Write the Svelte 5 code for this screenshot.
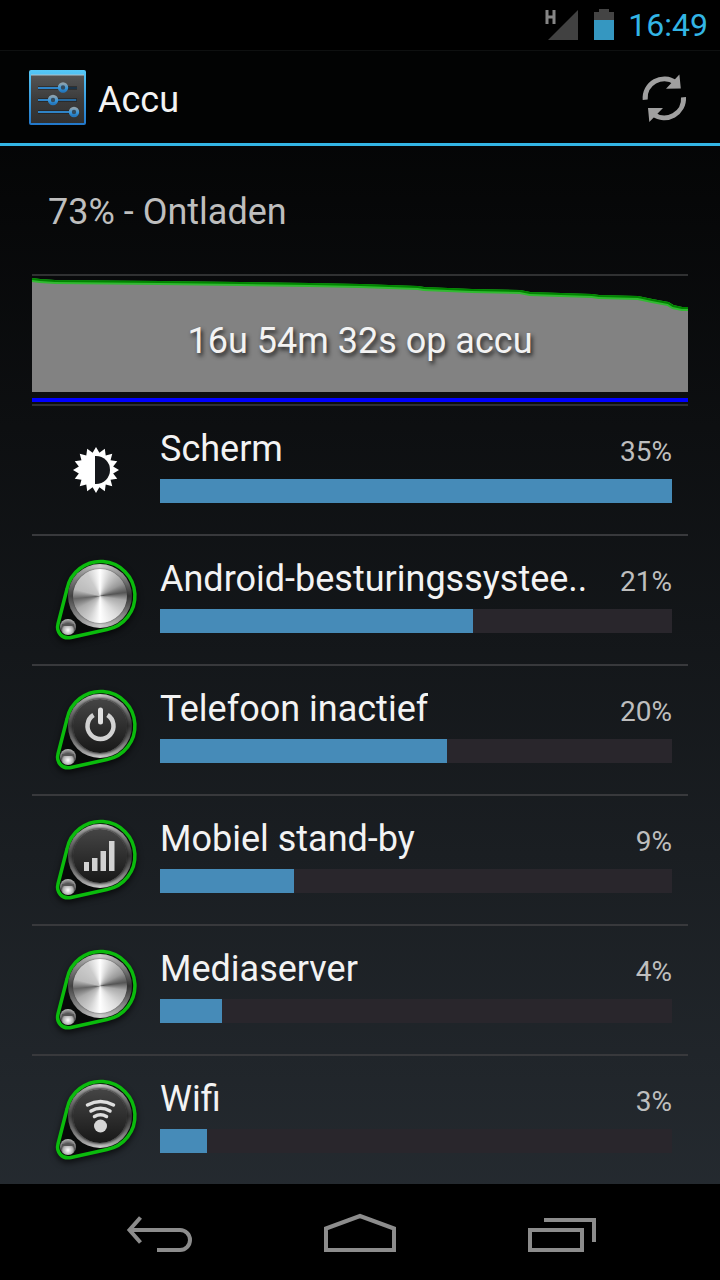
<script lang="ts">
	type Icon = 'display' | 'metal' | 'power' | 'signal' | 'wifi';

	interface Usage {
		name: string;
		percent: number;
		icon: Icon;
		// width of the bar relative to the heaviest consumer
		share: number;
	}

	const usage: Usage[] = [
		{ name: 'Scherm', percent: 35, icon: 'display', share: 100 },
		{ name: 'Android-besturingssystee..', percent: 21, icon: 'metal', share: 61.2 },
		{ name: 'Telefoon inactief', percent: 20, icon: 'power', share: 56.1 },
		{ name: 'Mobiel stand-by', percent: 9, icon: 'signal', share: 26.2 },
		{ name: 'Mediaserver', percent: 4, icon: 'metal', share: 12.1 },
		{ name: 'Wifi', percent: 3, icon: 'wifi', share: 9.2 }
	];

	// battery level over time, in chart units (656 x 116)
	const history = [
		[0, 4], [8, 5], [23, 6], [128, 7], [208, 8], [278, 9], [328, 10], [386, 12],
		[392, 13], [440, 15], [488, 16], [498, 18], [560, 20], [567, 21], [606, 22],
		[620, 25], [636, 28], [641, 31], [650, 33], [656, 33]
	];
	const line = history.map((p) => p.join(',')).join(' ');

	// 16-pointed star round the origin
	function star(outer: number, inner: number): string {
		const points = [];
		for (let i = 0; i < 32; i++) {
			const r = i % 2 ? inner : outer;
			const a = (i * Math.PI) / 16;
			points.push(`${(r * Math.sin(a)).toFixed(2)},${(-r * Math.cos(a)).toFixed(2)}`);
		}
		return points.join(' ');
	}
</script>

<div class="screen">
	<div class="status">
		<svg class="signal" width="34" height="34" viewBox="544 8 34 34" aria-hidden="true">
			<path d="M578 10V40H548Z" fill="#414141" />
			<path d="M543 8H557V25H543Z" fill="#000" />
			<path d="M547 10V24M554 10V24M547 17H554" stroke="#858585" stroke-width="3" />
		</svg>
		<svg width="20" height="32" viewBox="0 0 20 32" aria-hidden="true">
			<path d="M5 0H15V3H20V12H0V3H5Z" fill="#444" />
			<path d="M0 11H20V31H0Z" fill="#3597c1" />
		</svg>
		<time>16:49</time>
	</div>

	<header>
		<svg width="58" height="56" viewBox="0 0 58 56" aria-hidden="true">
			<defs>
				<linearGradient id="panel" x1="0" y1="0" x2="0" y2="1">
					<stop offset="0" stop-color="#555" />
					<stop offset="0.5" stop-color="#3c3c3c" />
					<stop offset="1" stop-color="#303030" />
				</linearGradient>
				<linearGradient id="frame" x1="0" y1="0" x2="0" y2="1">
					<stop offset="0" stop-color="#55c8f7" />
					<stop offset="1" stop-color="#2277c9" />
				</linearGradient>
				<linearGradient id="ring" x1="0" y1="0" x2="0" y2="1">
					<stop offset="0" stop-color="#8ba1ae" />
					<stop offset="0.6" stop-color="#3597dd" />
					<stop offset="1" stop-color="#2478be" />
				</linearGradient>
			</defs>
			<rect x="1" y="0" width="57" height="55" rx="2" fill="url(#frame)" />
			<path d="M3 5H56V53H3Z" fill="url(#panel)" />
			<path d="M3 5H56" stroke="#a9c4d0" />
			<path d="M10 18H49M10 30H49M10 42H49" stroke="#1b1b1b" stroke-width="3" />
			<path d="M10 18H31M10 30H20M29 30H48M10 42H42" stroke="#2f83c6" stroke-width="2" />
			<path d="M39 18H49M30 30H49" stroke="#214e75" stroke-width="1" />
			<g fill="#334b5f" stroke="url(#ring)" stroke-width="3">
				<circle cx="35" cy="17.5" r="3.7" />
				<circle cx="25" cy="30" r="3.7" />
				<circle cx="46" cy="42" r="3.7" />
			</g>
		</svg>
		<h1>Accu</h1>
		<button class="refresh" aria-label="Vernieuwen">
			<svg width="48" height="52" viewBox="640 72 48 52" aria-hidden="true">
				<g fill="none" stroke="#a0a0a0" stroke-width="5">
					<path d="M645.2 99.8A19.2 19.2 0 0 1 675.5 82.5" />
					<path d="M683.5 97.2A19.2 19.2 0 0 1 653.2 114.2" />
				</g>
				<path d="M679.4 74.4L680.8 88.5L666 88.8Z M649.3 122L648 108L663 108Z" fill="#a0a0a0" />
			</svg>
		</button>
	</header>

	<main>
		<p class="summary">73% - Ontladen</p>

		<div class="chart">
			<svg class="level" viewBox="0 0 656 116" preserveAspectRatio="none" aria-hidden="true">
				<polygon points="0,116 {line} 656,116" fill="#828282" />
				<polyline points={line} fill="none" stroke="#32b932" stroke-width="4" />
				<polyline points={line} fill="none" stroke="#008400" stroke-width="2" transform="translate(0 -1)" />
			</svg>
			<span class="duration">16u 54m 32s op accu</span>
			<div class="running"></div>
		</div>

		<ul>
			{#each usage as item}
				<li>
					<div class="icon">
						{#if item.icon === 'display'}
							<svg viewBox="-48 -48 96 96" aria-hidden="true">
								<polygon points={star(23, 17.5)} fill="#fff" />
								<path d="M-1 -14H0A14 14 0 0 1 0 14H-1Z" fill="#14161a" />
							</svg>
						{:else}
							<svg class="base" viewBox="0 0 96 96" aria-hidden="true">
								<defs>
									<radialGradient id="rivet" cx="0.5" cy="0.7" r="0.7">
										<stop offset="0" stop-color="#fff" />
										<stop offset="0.45" stop-color="#aaa" />
										<stop offset="0.6" stop-color="#555" />
										<stop offset="1" stop-color="#bbb" />
									</radialGradient>
								</defs>
								<path
									d="M19 37A34.300 34.300 0 1 1 59 77.500L23 85.500C14 87.500 8 80 10 72Z"
									fill="#080a09"
									stroke="#0bbb0d"
									stroke-width="3.500"
								/>
								<circle cx="20" cy="75" r="8" fill="url(#rivet)" />
								<path d="M14 73H26" stroke="#555" stroke-width="2" />
							</svg>
							<div class="rim"></div>
							<div class="face" class:dark={item.icon !== 'metal'}></div>
							<svg viewBox="0 0 96 96" aria-hidden="true">
								{#if item.icon === 'power'}
									<path d="M45.5 33A13 13 0 1 0 59.5 33" fill="none" stroke="#d2d2d2" stroke-width="4.5" />
									<path d="M52.5 28V40" stroke="#e0e0e0" stroke-width="5" stroke-linecap="round" />
								{:else if item.icon === 'signal'}
									<path
										d="M36 50H41V59H36Z M44 46H49.5V59H44Z M52.5 39H58V59H52.5Z M61 29H66.5V59H61Z"
										fill="#d2d2d2"
									/>
								{:else if item.icon === 'wifi'}
									<g fill="none" stroke="#dedede" stroke-width="3.5" stroke-linecap="round">
										<path d="M39.5 33Q52.5 26 65.5 33" />
										<path d="M43 39Q52.5 33.5 62 39" />
										<path d="M46.5 44.5Q52.5 41 58.5 44.5" />
									</g>
									<circle cx="52.5" cy="54" r="6.5" fill="#d6d6d6" />
								{/if}
							</svg>
						{/if}
					</div>
					<div class="details">
						<div class="label">
							<span class="name">{item.name}</span>
							<span class="percent">{item.percent}%</span>
						</div>
						<div class="track">
							<div class="fill" style="width: {item.share}%"></div>
						</div>
					</div>
				</li>
			{/each}
		</ul>
	</main>

	<nav>
		<button aria-label="Terug">
			<svg width="72" height="48" viewBox="124 1208 72 48" aria-hidden="true">
				<path d="M157 1250H180A10 10 0 0 0 180 1230H130" />
				<path d="M140.5 1217.5L129.5 1230L140.5 1242.5" />
			</svg>
		</button>
		<button aria-label="Startscherm">
			<svg width="72" height="48" viewBox="324 1208 72 48" aria-hidden="true">
				<path d="M326 1250V1228.5L360 1216L394 1228.5V1250Z" />
			</svg>
		</button>
		<button aria-label="Recente apps">
			<svg width="72" height="48" viewBox="524 1208 72 48" aria-hidden="true">
				<path d="M530 1230H582V1250H530Z" />
				<path d="M544 1220H594V1242" />
			</svg>
		</button>
	</nav>
</div>

<style>
	:global(body) {
		background: #000;
	}

	.screen {
		display: flex;
		flex-direction: column;
		min-height: 100vh;
		font-family: Roboto, 'Noto Sans', sans-serif;
		color: #f3f3f3;
		background: linear-gradient(#000, #272d33);
	}

	svg {
		display: block;
	}

	button {
		padding: 0;
		border: 0;
		background: none;
	}

	.status {
		display: flex;
		align-items: center;
		justify-content: flex-end;
		height: 50px;
		padding-right: 12px;
		background: #000;
	}

	.status .signal {
		margin-right: 16px;
	}

	time {
		margin-left: 14px;
		font-size: 32px;
		color: #33b5e5;
	}

	header {
		display: flex;
		align-items: center;
		box-sizing: border-box;
		height: 96px;
		padding: 2px 32px 0 28px;
		border-top: 1px solid #0e1010;
		border-bottom: 3px solid #33b5e5;
		background: #020303;
	}

	h1 {
		flex: 1;
		margin: 0 0 0 12px;
		padding-top: 4px;
		font-size: 36px;
		font-weight: 400;
	}

	main {
		flex: 1;
		padding: 0 32px;
	}

	.summary {
		margin: 0;
		padding: 45px 16px 41px;
		font-size: 36px;
		line-height: 42px;
		color: #bebebe;
	}

	.chart {
		display: grid;
		border-top: 2px solid #303132;
		border-bottom: 2px solid #303132;
	}

	.level,
	.duration {
		grid-area: 1 / 1;
	}

	.level {
		width: 100%;
		height: 116px;
	}

	.duration {
		align-self: center;
		padding-top: 14px;
		text-align: center;
		font-size: 36px;
		line-height: 42px;
		text-shadow: 2px 3px 4px #222;
	}

	.running {
		height: 4px;
		margin: 6px 0 2px;
		background: #00f;
	}

	ul {
		margin: 0;
		padding: 0;
		list-style: none;
	}

	li {
		display: flex;
		gap: 16px;
		padding: 16px;
		border-bottom: 2px solid #38393c;
	}

	li:last-child {
		border-bottom: 0;
	}

	.icon {
		display: grid;
		flex: none;
		width: 96px;
		height: 96px;
	}

	/* keeps the layers in source order above the filtered base */
	.icon > * {
		position: relative;
		grid-area: 1 / 1;
	}

	.base {
		filter: drop-shadow(0 3px 3px #000a);
	}

	.rim {
		width: 64px;
		height: 64px;
		margin: 12px 0 0 20px;
		border-radius: 50%;
		background: conic-gradient(#ccc, #888 50deg, #333 90deg, #888 130deg, #ccc 180deg, #888 230deg, #444 270deg, #888 310deg, #ccc);
	}

	.face {
		width: 54px;
		height: 54px;
		margin: 17px 0 0 25px;
		border-radius: 50%;
		background: conic-gradient(#fff, #c8c8c8 30deg, #999 60deg, #555 82deg, #aaa 100deg, #ddd 140deg, #fff 180deg, #ccc 210deg, #aaa 240deg, #666 264deg, #bbb 285deg, #ccc 330deg, #fff);
		box-shadow: 0 0 2px #333;
	}

	.face.dark {
		background: linear-gradient(#454545, #181818);
		box-shadow: 0 0 3px 1px #222;
	}

	.details {
		flex: 1;
		min-width: 0;
		padding-top: 6px;
	}

	.label {
		display: flex;
		align-items: baseline;
		justify-content: space-between;
		gap: 16px;
		line-height: 42px;
		white-space: nowrap;
	}

	.name {
		overflow: hidden;
		font-size: 36px;
	}

	.percent {
		font-size: 28px;
		color: #bebebe;
	}

	.track {
		height: 24px;
		margin-top: 6px;
		background: #29262c;
	}

	.fill {
		height: 100%;
		background: #468bb8;
	}

	nav {
		display: grid;
		grid-template-columns: repeat(3, 1fr);
		height: 96px;
		padding: 0 60px;
		background: #000;
	}

	nav button {
		display: grid;
		place-items: center;
	}

	nav svg {
		fill: none;
		stroke: #8c8c8c;
		stroke-width: 4;
	}
</style>
